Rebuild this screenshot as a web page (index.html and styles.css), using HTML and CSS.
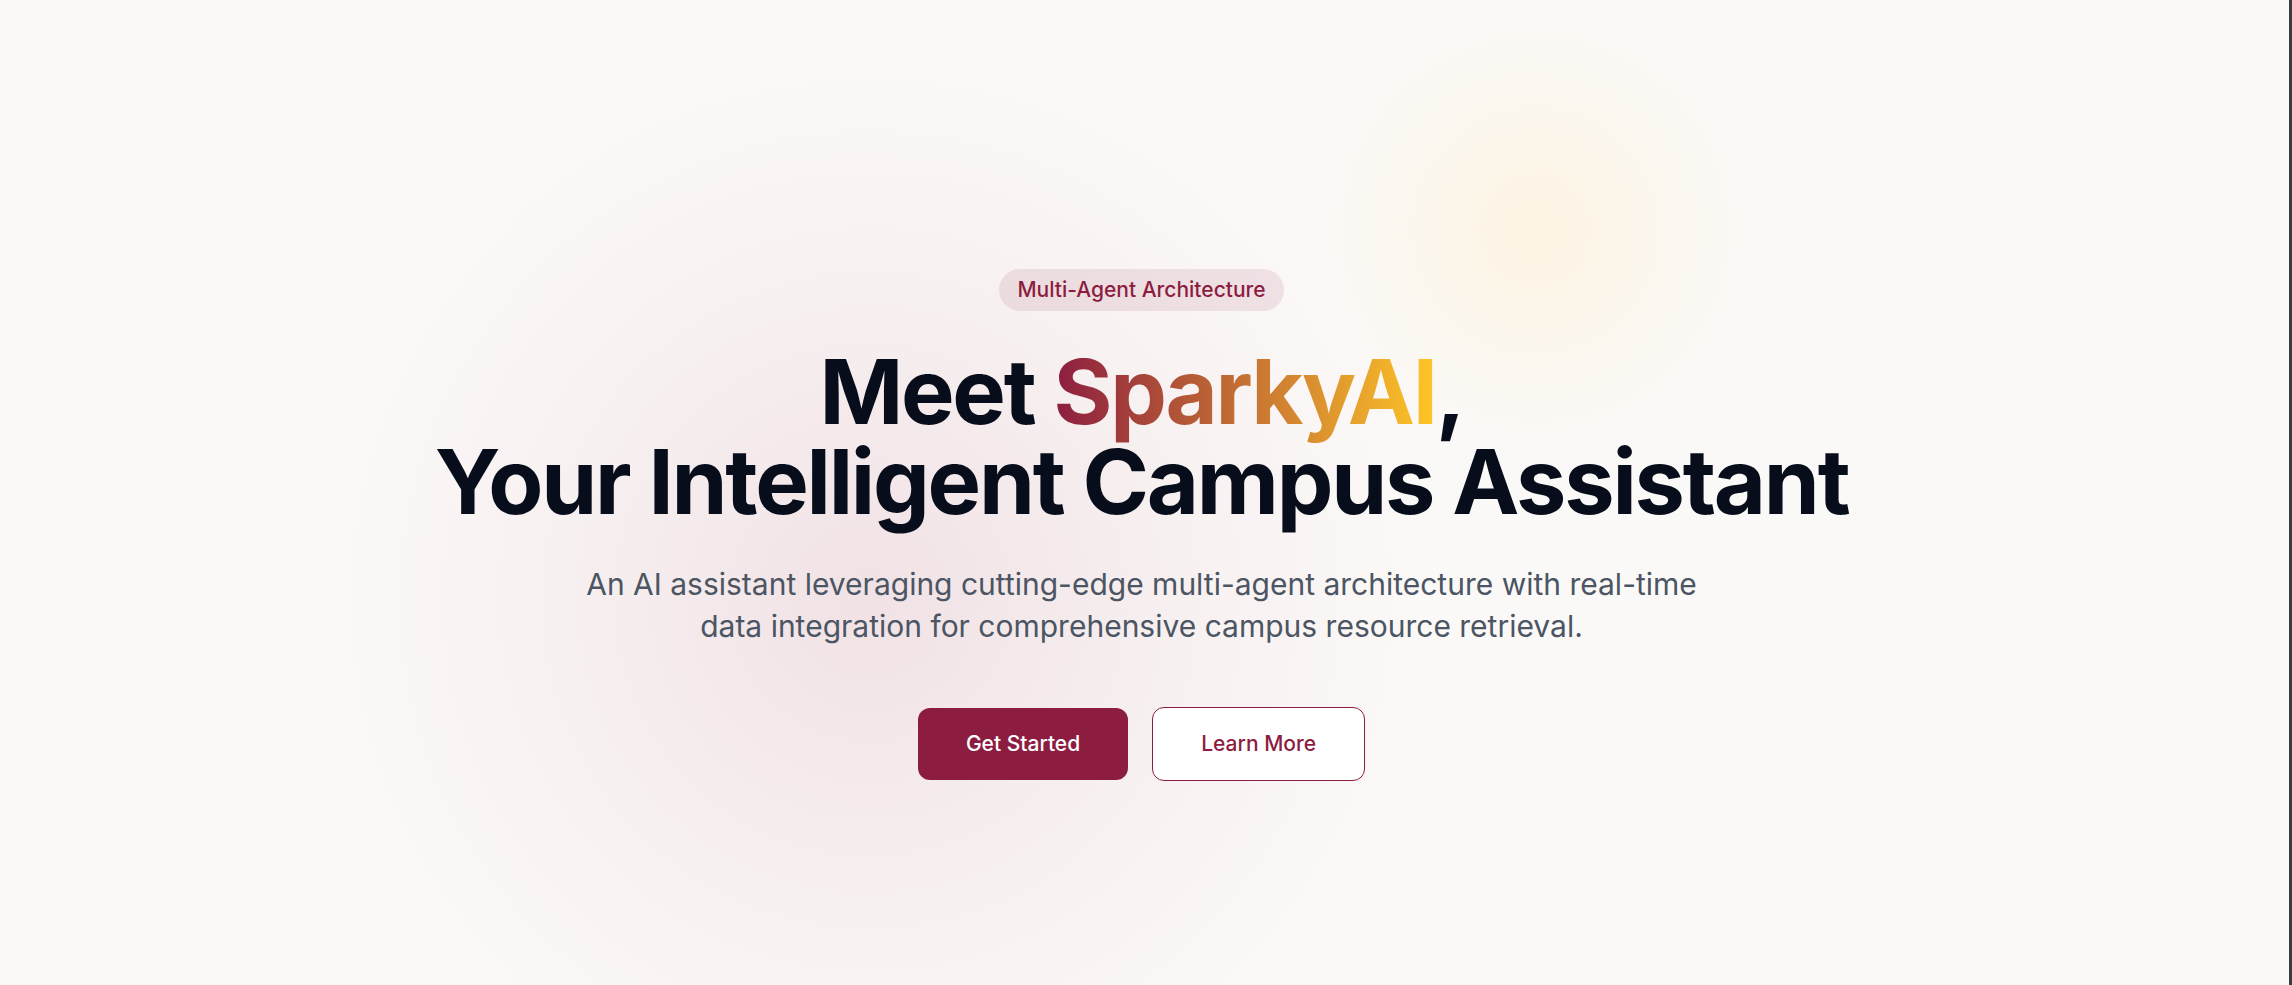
FILE: index.html
```html
<!DOCTYPE html>
<html lang="en">
<head>
<meta charset="utf-8">
<title>SparkyAI</title>
<link rel="stylesheet" href="styles.css">
</head>
<body>
<main class="hero">
  <span class="badge">Multi-Agent Architecture</span>
  <h1 class="title">Meet <span class="brand">SparkyAI</span>,<br>Your Intelligent Campus Assistant</h1>
  <p class="lead">An AI assistant leveraging cutting-edge multi-agent architecture with real-time data integration for comprehensive campus resource retrieval.</p>
  <div class="actions">
    <a class="btn btn-primary" href="#">Get Started</a>
    <a class="btn btn-outline" href="#">Learn More</a>
  </div>
</main>
</body>
</html>
```

FILE: styles.css
```css
html, body {
  margin: 0;
  padding: 0;
}
body {
  width: 2292px;
  height: 985px;
  box-sizing: border-box;
  border-right: 3px solid #3d3d3d;
  overflow: hidden;
  font-family: Inter, "Noto Sans", sans-serif;
  background-color: #fbf9f7;
  background-image:
    radial-gradient(circle 220px at 1535px 230px, rgba(255, 236, 196, 0.4), rgba(255, 236, 196, 0) 100%),
    radial-gradient(circle 560px at 870px 600px, rgba(232, 206, 214, 0.55), rgba(232, 206, 214, 0.15) 65%, rgba(232, 206, 214, 0) 100%);
}
.hero {
  height: 100%;
  box-sizing: border-box;
  padding: 269px 6px 0 0;
  display: flex;
  flex-direction: column;
  align-items: center;
  text-align: center;
}
.badge {
  display: inline-block;
  padding: 6px 18px;
  border-radius: 9999px;
  background: rgba(140, 29, 64, 0.1);
  color: #8c1d40;
  font-size: 21px;
  line-height: 30px;
  font-weight: 500;
  margin-bottom: 36px;
}
.title {
  margin: 0;
  font-size: 90px;
  line-height: 90px;
  font-weight: 700;
  letter-spacing: -2.25px;
  color: #080d1c;
}
.brand {
  background: linear-gradient(90deg, #8c1d40, #ffc627);
  -webkit-background-clip: text;
  background-clip: text;
  color: transparent;
}
.lead {
  margin: 36px 0 0;
  max-width: 1152px;
  font-size: 30px;
  line-height: 42px;
  color: #4b5563;
}
.actions {
  margin-top: 60px;
  display: flex;
  align-items: center;
  gap: 24px;
}
.btn {
  display: inline-block;
  padding: 21px 48px;
  border-radius: 12px;
  font-size: 21px;
  line-height: 30px;
  font-weight: 500;
  text-decoration: none;
}
.btn-primary {
  background: #8c1d40;
  color: #ffffff;
}
.btn-outline {
  background: #ffffff;
  color: #8c1d40;
  border: 1.5px solid #8c1d40;
}
```
